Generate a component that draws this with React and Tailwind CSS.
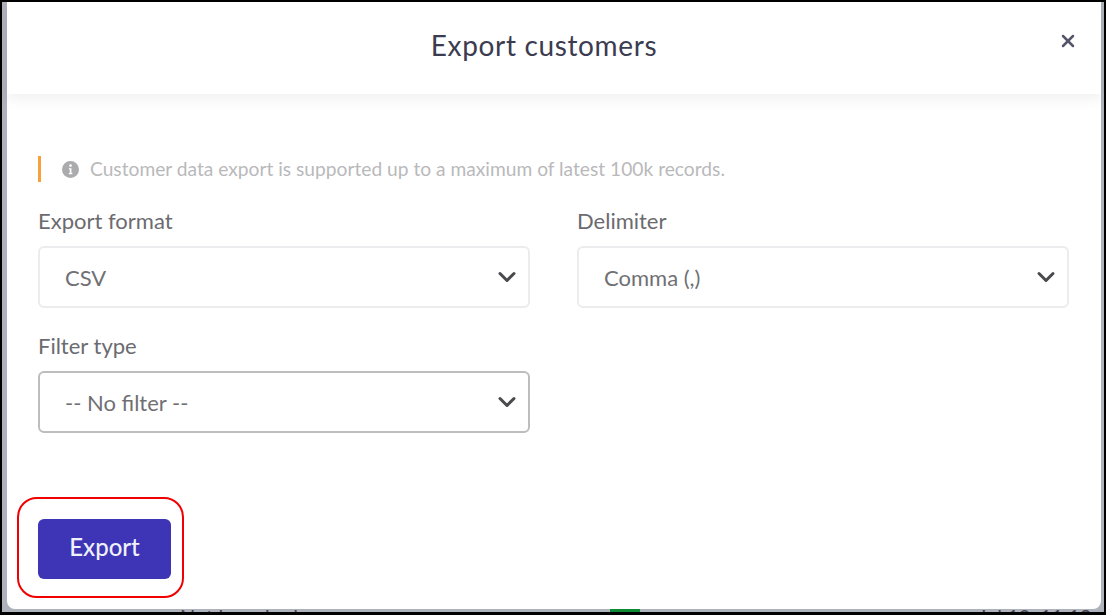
import { ChevronDown, X } from 'lucide-react';

const font = { fontFamily: '"Lato", "Open Sans", sans-serif' };

function SelectBox({ label, value, focused }) {
  return (
    <div>
      <label className="block h-[26px] text-[22px] leading-[26px] text-[#6b6b6f]">{label}</label>
      <div
        className={`mt-[12px] flex h-[62px] items-center justify-between rounded-[6px] border-2 bg-white pl-[25px] pr-[7px] text-[22px] text-[#707074] ${
          focused ? 'border-[#bdbdc0]' : 'border-[#ececee]'
        }`}
      >
        <span>{value}</span>
        <ChevronDown className="h-[28px] w-[28px] text-[#4a4a4e]" strokeWidth={2.6} />
      </div>
    </div>
  );
}

export default function App() {
  return (
    <div
      className="relative h-[615px] w-[1106px] overflow-hidden border-x-[2px] border-t-[2px] border-b-[3px] border-black bg-[#aeb2bb] pl-[5px] pr-[3px]"
      style={font}
    >
      <div className="flex h-[607px] flex-col rounded-bl-[8px] rounded-br-[8px] bg-white">
        <div className="relative flex h-[92px] shrink-0 items-center justify-center bg-white pb-[6px] pr-[20px] shadow-[0_4px_14px_rgba(0,0,0,0.07)]">
          <h2 className="text-[28px] font-normal tracking-[0.65px] text-[#3c3c50]">Export customers</h2>
          <button className="absolute right-[23px] top-[29px] text-[#55556b]">
            <X className="h-[20px] w-[20px]" strokeWidth={3} />
          </button>
        </div>

        <div className="flex flex-1 flex-col pl-[31px] pr-[31px]">
          <div className="mt-[62px] flex h-[26px] items-center border-l-[3px] border-[#f7a13a] pl-[21px] text-[19.2px] text-[#b9b9bb]">
            <svg viewBox="0 0 16 16" className="mr-[11px] h-[17px] w-[17px] shrink-0" fill="#ababad">
              <path d="M8 0a8 8 0 1 0 0 16A8 8 0 0 0 8 0Zm0 3a1.3 1.3 0 1 1 0 2.6A1.3 1.3 0 0 1 8 3Zm1.8 9.4H6.4v-1.2h.9V8H6.5V6.8h2.4v4.4h.9v1.2Z" />
            </svg>
            <span>Customer data export is supported up to a maximum of latest 100k records.</span>
          </div>

          <div className="mt-[26px] grid grid-cols-[492px_492px] gap-x-[47px] gap-y-[25px]">
            <SelectBox label="Export format" value="CSV" />
            <SelectBox label="Delimiter" value="Comma (,)" />
            <SelectBox label="Filter type" value="-- No filter --" focused />
          </div>

          <button className="mt-[86px] h-[60px] w-[133px] rounded-[6px] bg-[#3d35b5] pb-[4px] text-[24px] font-medium text-[#f0f0fa]">
            Export
          </button>
        </div>
      </div>

      {/* page behind the dialog, only the top edge of its text shows */}
      <div className="flex h-[3px] overflow-hidden text-[20px] leading-[14px] text-[#4a4350]">
        <span className="ml-[173px] w-[430px] shrink-0">Not launched</span>
        <span className="h-[3px] w-[30px] shrink-0 bg-[#0f8a35]" />
        <span className="ml-[338px] shrink-0">Jul 10, 11:12</span>
      </div>

      {/* red callout drawn over the screenshot */}
      <div className="absolute left-[15px] top-[495px] h-[101px] w-[167px] rounded-[20px] border-2 border-[#f00000]" />
    </div>
  );
}
